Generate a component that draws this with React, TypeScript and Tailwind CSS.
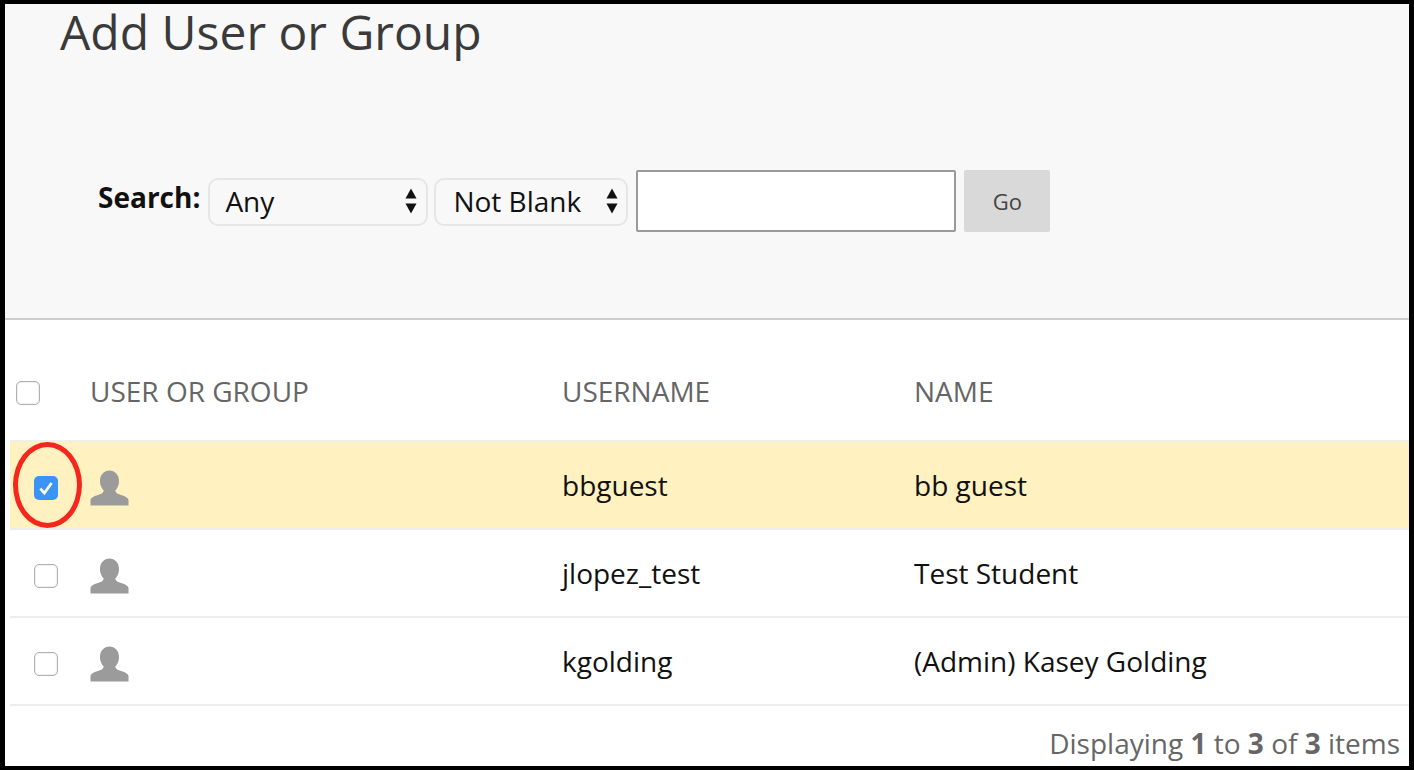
const rows = [
  { username: 'bbguest', name: 'bb guest', checked: true },
  { username: 'jlopez_test', name: 'Test Student', checked: false },
  { username: 'kgolding', name: '(Admin) Kasey Golding', checked: false },
];

function Arrows() {
  return (
    <svg width="14" height="26" viewBox="0 0 14 26" className="shrink-0">
      <path d="M7 0.5 L12.5 10.5 H1.5 Z" fill="#111" />
      <path d="M7 25.5 L12.5 15.5 H1.5 Z" fill="#111" />
    </svg>
  );
}

function Person() {
  return (
    <svg width="39" height="36" viewBox="0 0 40 36" className="blur-[0.4px]">
      <path
        d="M20 0 C25.500 0 29.800 4.500 29.800 11 C29.800 15 28 18.500 26 20.500 C26 22.500 27.500 23.500 30 24.500 C35 26.300 39 27.500 39.500 30.500 L39.500 36 H0.500 L0.500 30.500 C1 27.500 5 26.300 10 24.500 C12.500 23.500 14 22.500 14 20.500 C12 18.500 10.200 15 10.200 11 C10.200 4.500 14.500 0 20 0 Z"
        fill="#9b9b9b"
      />
    </svg>
  );
}

function Checkbox({ checked }: { checked: boolean }) {
  if (checked) {
    return (
      <div className="flex h-6 w-6 items-center justify-center rounded-[5px] bg-[#3b93f5]">
        <svg width="18" height="18" viewBox="0 0 16 16">
          <path d="M3 8.500 L6.500 12.500 L13 3.500" fill="none" stroke="white" strokeWidth="2.400" />
        </svg>
      </div>
    );
  }
  return <div className="h-6 w-6 rounded-[5px] border border-[#b0b0b0] bg-white shadow-[inset_0_0_2px_#ccc]" />;
}

export default function App() {
  return (
    <div className="flex h-[770px] w-[1414px] flex-col overflow-hidden border-y-4 border-r-[5px] border-l-[5px] border-black bg-white font-['Open_Sans',sans-serif]">
      {/* search header */}
      <div className="h-[316px] shrink-0 border-b-2 border-[#cdcdcd] bg-[#f8f8f8]">
        <h1 className="pl-[55px] text-[48px] leading-[56px] font-normal text-[#3a3a3a]">Add User or Group</h1>
        <div className="mt-[110px] flex items-center pl-[93px]">
          <span className="mr-[8px] -translate-y-[4px] text-[28px] leading-[38px] font-bold text-[#111]">Search:</span>
          <div className="mt-[2px] flex h-12 w-[220px] items-center justify-between rounded-[10px] border-2 border-[#e6e6e6] bg-[#f8f8f8] pr-[8px] pb-[2px] pl-[15px] text-[28px] text-[#111]">
            Any
            <Arrows />
          </div>
          <div className="mt-[2px] ml-[6px] flex h-12 w-[194px] items-center justify-between rounded-[10px] border-2 border-[#e6e6e6] bg-[#f8f8f8] pr-[7px] pb-[2px] pl-[17px] text-[28px] text-[#111]">
            Not Blank
            <Arrows />
          </div>
          <input className="ml-2 h-[62px] w-[320px] rounded-[2px] border-2 border-[#999] bg-white" />
          <button className="ml-2 h-[62px] w-[86px] rounded-[2px] bg-[#d9d9d9] text-[22px] text-[#444]">Go</button>
        </div>
      </div>

      {/* results */}
      <div className="pl-[5px]">
        <div className="grid h-[120px] grid-cols-[80px_472px_352px_1fr] items-center pt-[25px] text-[28px] text-[#666]">
          <div className="pl-[6px]">
            <Checkbox checked={false} />
          </div>
          <div className="pb-1">USER OR GROUP</div>
          <div className="pb-1">USERNAME</div>
          <div className="pb-1">NAME</div>
        </div>
        {rows.map((row) => (
          <div
            key={row.username}
            className={`grid h-[88px] grid-cols-[80px_472px_352px_1fr] items-center border-t-2 border-[#eeeeee] text-[28px] text-[#111] ${
              row.checked ? 'bg-[#fff1c0]' : 'bg-white'
            }`}
          >
            <div className="relative flex h-full items-center pt-[6px] pl-6">
              <Checkbox checked={row.checked} />
              {row.checked && (
                <div className="absolute top-0 left-[3px] h-[86px] w-[69px] rounded-[50%] border-[5px] border-[#f5271c]" />
              )}
            </div>
            <div className="pt-[6px]">
              <Person />
            </div>
            <div>{row.username}</div>
            <div>{row.name}</div>
          </div>
        ))}
        <div className="border-t-2 border-[#eeeeee] pt-[15px] pr-[9px] text-right text-[28px] leading-[44px] text-[#666]">
          Displaying <b>1</b> to <b>3</b> of <b>3</b> items
        </div>
      </div>
    </div>
  );
}
